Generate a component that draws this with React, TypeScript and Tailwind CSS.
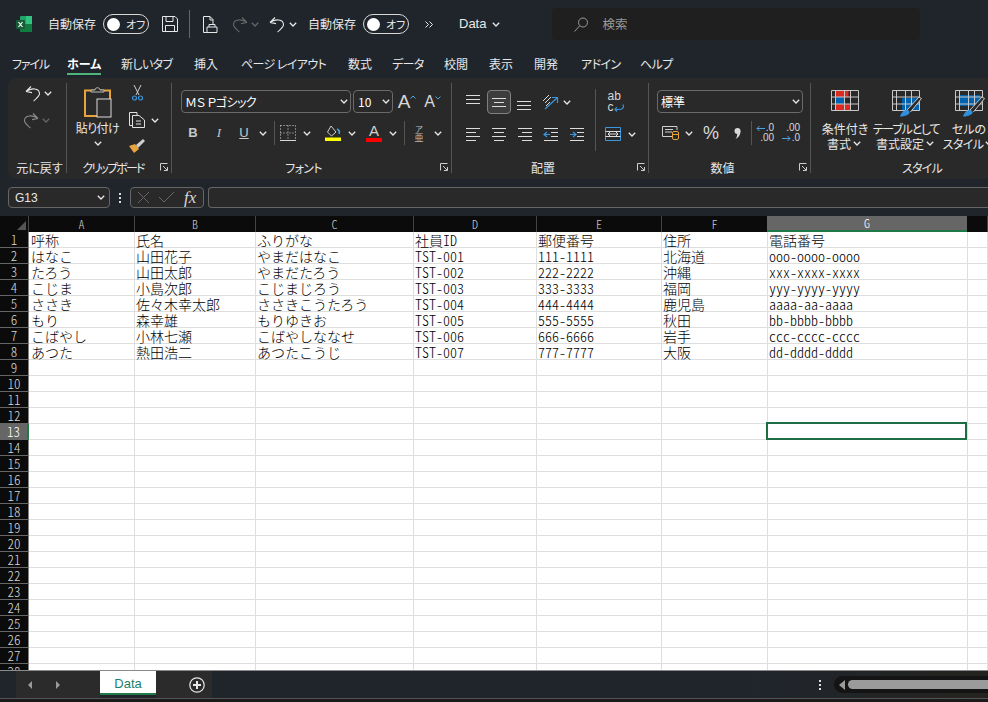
import React from "react";

const ui = "font-['Noto_Sans_CJK_JP','Noto_Sans',sans-serif]";

function Chev({ dim = false, cls = "w-3" }: { dim?: boolean; cls?: string }) {
  return (
    <span className={`flex h-6 items-center justify-center ${cls}`}>
      <svg width="8" height="5" viewBox="0 0 8 5" fill="none" stroke={dim ? "#666" : "#e8e8e8"} strokeWidth="1.3">
        <path d="M0.8 0.8 L4 4 L7.2 0.8" />
      </svg>
    </span>
  );
}

function Undo({ color = "#e6e6e6", flip = false, size = 16 }: { color?: string; flip?: boolean; size?: number }) {
  return (
    <svg width={size} height={size + 1} viewBox="0 0 16 17" fill="none" stroke={color} strokeWidth="1.1" className={flip ? "-scale-x-100" : ""}>
      <path d="M1 6.5 L6 1.5 M1 6.5 L7 7.6 M1 6.5 C6 2.5 14.5 3 14.5 8.6 C14.5 11.5 11 13.5 8.6 16" />
    </svg>
  );
}

function Toggle() {
  return (
    <div className="flex h-5 w-[46px] items-center rounded-full border border-[#d8d8d8] pl-[3px]">
      <span className="h-[13px] w-[13px] shrink-0 rounded-full bg-white" />
      <span className="ml-[6px] whitespace-nowrap text-[11px] leading-none text-[#e8e8e8]">オフ</span>
    </div>
  );
}

function Lines({ rows, w = 16 }: { rows: [number, number, number][]; w?: number }) {
  return (
    <svg width={w} height="17" viewBox={`0 0 ${w} 17`} stroke="#dcdcdc" strokeWidth="1">
      {rows.map((r, i) => (
        <path key={i} d={`M${r[0]} ${r[2] + 0.5} H${r[1]}`} />
      ))}
    </svg>
  );
}

function Launcher() {
  return (
    <svg width="8" height="8" viewBox="0 0 8 8" fill="none" stroke="#cfcfcf" strokeWidth="1">
      <path d="M0.5 7.5 V0.5 H7.5 M3 3 L7 7 M7.5 4 V7.5 H4" />
    </svg>
  );
}

function Group({ w, label, labelCls = "", launcher, children, last }: { w: string; label: string; labelCls?: string; launcher?: boolean; children: React.ReactNode; last?: boolean }) {
  return (
    <div className={`mb-[6px] mt-[5px] flex shrink-0 flex-col ${w} ${last ? "" : "border-r border-[#555]"}`}>
      <div className="min-h-0 flex-1">{children}</div>
      <div className={`relative h-[14px] whitespace-nowrap text-center text-[12px] leading-[17px] text-[#e6e6e6] ${labelCls}`}>
        {label}
        {launcher && (
          <span className="absolute right-[3px] top-[4px] flex">
            <Launcher />
          </span>
        )}
      </div>
    </div>
  );
}

const cell = "flex h-6 w-[26px] shrink-0 items-center justify-center";

function Combo({ cls, text, textCls = "" }: { cls: string; text: string; textCls?: string }) {
  return (
    <div className={`flex h-[23px] shrink-0 items-center justify-between rounded-[4px] border border-[#6a6a6a] pl-[3px] ${cls}`}>
      <span className={`whitespace-nowrap text-[12px] leading-none text-white ${textCls}`}>{text}</span>
      <Chev />
    </div>
  );
}

function StyleIcon({ kind }: { kind: number }) {
  const g = "#c8c8c8";
  return (
    <svg width="28" height="26" viewBox="0 0 28 26" fill="none" className="overflow-visible">
      {kind === 0 && (
        <>
          <rect x="4.500" y="1" width="13" height="6" fill="#dc2a20" />
          <rect x="4.500" y="7" width="9" height="7" fill="#0063b1" />
          <rect x="4.500" y="14" width="15" height="7" fill="#dc2a20" />
        </>
      )}
      {kind === 1 && <rect x="10" y="8" width="18" height="13" fill="#0063b1" />}
      {kind === 2 && <rect x="5" y="5" width="20" height="11" fill="#0063b1" />}
      <path d="M.5.5H27.500V20.500H.5Z M.5 7H27.500 M.5 14H27.500 M4.500 .5V20.500 M13.500 .5V20.500 M19.500 .5V20.500" stroke={g} strokeWidth="1" />
      {kind !== 0 && (
        <>
          <path d="M15 20 L27 7 L29.500 8.500 L18.500 22" fill="#2b2b2b" stroke={g} strokeWidth="1" />
          <path d="M8 26.500 C9.500 22 12 20 15 20 C18 21 18.500 23 16 24.500 C13.500 26 11 26.500 8 26.500Z" fill="#2f8fdc" />
        </>
      )}
    </svg>
  );
}

const widths = ["w-[106px]", "w-[121px]", "w-[158px]", "w-[123px]", "w-[125px]", "w-[106px]", "w-[200px]", "flex-1"];
const letters = ["A", "B", "C", "D", "E", "F", "G", ""];

const data: string[][] = [
  ["呼称", "氏名", "ふりがな", "社員ID", "郵便番号", "住所", "電話番号"],
  ["はなこ", "山田花子", "やまだはなこ", "TST-001", "111-1111", "北海道", "ooo-oooo-oooo"],
  ["たろう", "山田太郎", "やまだたろう", "TST-002", "222-2222", "沖縄", "xxx-xxxx-xxxx"],
  ["こじま", "小島次郎", "こじまじろう", "TST-003", "333-3333", "福岡", "yyy-yyyy-yyyy"],
  ["ささき", "佐々木幸太郎", "ささきこうたろう", "TST-004", "444-4444", "鹿児島", "aaaa-aa-aaaa"],
  ["もり", "森幸雄", "もりゆきお", "TST-005", "555-5555", "秋田", "bb-bbbb-bbbb"],
  ["こばやし", "小林七瀬", "こばやしななせ", "TST-006", "666-6666", "岩手", "ccc-cccc-cccc"],
  ["あつた", "熱田浩二", "あつたこうじ", "TST-007", "777-7777", "大阪", "dd-dddd-dddd"],
];

const tabs: [string, string][] = [
  ["ファイル", "w-[55px] tracking-[-1.2px]"],
  ["ホーム", "w-[54px]"],
  ["新しいタブ", "w-[73px] tracking-[-0.6px]"],
  ["挿入", "w-[47px]"],
  ["ページ レイアウト", "w-[107px] tracking-[-0.6px]"],
  ["数式", "w-[44px]"],
  ["データ", "w-[52px] tracking-[-0.6px]"],
  ["校閲", "w-[45px]"],
  ["表示", "w-[45px]"],
  ["開発", "w-[47px]"],
  ["アドイン", "w-[59px] tracking-[-0.6px]"],
  ["ヘルプ", "w-[50px] tracking-[-0.6px]"],
];

export default function App() {
  return (
    <div className={`flex h-[702px] w-[988px] flex-col overflow-hidden bg-[#20252c] [font-feature-settings:'palt'] ${ui}`}>
      {/* Title bar */}
      <div className="flex h-12 shrink-0 items-center text-[12px] text-[#e8e8e8]">
        <svg className="ml-4" width="16" height="16" viewBox="0 0 16 16">
          <rect x="4" y="0" width="12" height="16" rx="1" fill="#21a366" />
          <rect x="10" y="0" width="6" height="8" fill="#33c481" />
          <rect x="4" y="8" width="12" height="8" fill="#107c41" />
          <rect x="0" y="4" width="9" height="9" rx="1" fill="#185c37" />
          <path d="M2.500 6 L6.500 11 M6.500 6 L2.500 11" stroke="#fff" strokeWidth="1.2" />
        </svg>
        <span className="ml-4 w-12">自動保存</span>
        <span className="ml-[7px]"><Toggle /></span>
        <svg className="ml-[13px]" width="16" height="16" viewBox="0 0 16 16" fill="none" stroke="#e8e8e8" strokeWidth="1">
          <path d="M.5.5H13L15.500 3V15.500H.5Z M4 .5V5.500H11V.5 M3.500 15.500V9.500H12.500V15.500" />
        </svg>
        <span className="ml-[11px] h-7 w-px bg-[#666]" />
        <svg className="ml-[13px]" width="15" height="17" viewBox="0 0 15 17" fill="none" stroke="#e8e8e8" strokeWidth="1">
          <path d="M7 16.500H.5V.5H7L10 3.500V8 M4 16.500V11H14V16.500H4 M6 11V8.500H12V11 M7 .5V4H10" />
        </svg>
        <span className="ml-[14px]"><Undo color="#666" flip /></span>
        <Chev dim cls="ml-[1px] w-3" />
        <span className="ml-[8px]"><Undo /></span>
        <Chev cls="w-4" />
        <span className="ml-[7px] w-12">自動保存</span>
        <span className="ml-[7px]"><Toggle /></span>
        <svg className="ml-[16px]" width="8" height="7" viewBox="0 0 8 7" fill="none" stroke="#e8e8e8">
          <path d="M.5.5 L3.500 3.500 L.5 6.500 M4.500.5 L7.500 3.500 L4.500 6.500" />
        </svg>
        <span className="ml-[26px] font-['Liberation_Sans'] text-[13px]">Data</span>
        <Chev cls="ml-[2px] w-4" />
        <div className="ml-[48px] flex h-8 w-[368px] items-center rounded-[4px] bg-[#1f1f1f] pl-[22px] text-[#9a9a9a]">
          <svg width="14" height="15" viewBox="0 0 14 15" fill="none" stroke="#9a9a9a" strokeWidth="1">
            <circle cx="9" cy="5.500" r="4.500" />
            <path d="M5.500 9 L.5 14.500" />
          </svg>
          <span className="ml-[14px] text-[12.5px]">検索</span>
        </div>
      </div>

      {/* Ribbon tabs */}
      <div className="flex h-[30px] shrink-0 items-start whitespace-nowrap pl-3 pt-[7px] text-[12px] leading-[17px] text-[#e8e8e8]">
        {tabs.map(([t, w], i) => (
          <div key={t} className={`shrink-0 ${w}`}>
            <span className={`inline-block ${i === 1 ? "border-b-[2px] border-[#4fb37c] pb-[1px] font-bold text-white" : ""}`}>{t}</span>
          </div>
        ))}
      </div>

      {/* Ribbon */}
      <div className="ml-2 flex h-[101px] shrink-0 overflow-hidden rounded-l-lg bg-[#292929] text-[12px] text-[#e8e8e8]">
        <Group w="w-[59px]" label="元に戻す" labelCls="pl-[5px]">
          <div className="flex h-[20px] items-center pl-[17px]"><Undo /><Chev cls="ml-[1px] w-3" /></div>
          <div className="mt-[7px] flex h-[20px] items-center pl-[15px]"><Undo color="#8a8a8a" flip /><Chev dim cls="ml-[1px] w-3" /></div>
        </Group>

        <Group w="w-[105px]" label="クリップボード" labelCls="pr-[12px] tracking-[-1.8px]" launcher>
          <div className="flex pl-[4px]">
            <div className="flex w-[53px] shrink-0 flex-col items-center">
              <svg width="28" height="32" viewBox="0 0 28 32" fill="none" className="mt-[3px]">
                <path d="M1 4.500H26V30H1Z" stroke="#e8a33d" strokeWidth="2" />
                <rect x="13" y="13" width="14" height="18" fill="#2b2b2b" stroke="#dcdcdc" />
                <path d="M7 6V4H11C11 1 16 1 16 4H20V6Z" fill="#2b2b2b" stroke="#bdbdbd" />
              </svg>
              <span className="mt-[1px] whitespace-nowrap text-[12px] leading-[18px] tracking-[-0.5px]">貼り付け</span>
              <span className="-mt-[6px] flex"><Chev /></span>
            </div>
            <div className="-mt-[2px] flex flex-col">
              <div className="flex h-[24px] w-[26px] items-center justify-center">
                <svg width="11" height="16" viewBox="0 0 11 16" fill="none">
                  <path d="M2 0 L7 10 M9 0 L4 10" stroke="#cfcfcf" />
                  <circle cx="2.500" cy="13" r="2" stroke="#3a96dd" strokeWidth="1.200" />
                  <circle cx="8.500" cy="13" r="2" stroke="#3a96dd" strokeWidth="1.200" />
                </svg>
              </div>
              <div className="flex h-[30px] items-center pl-[5px]">
                <svg width="16" height="16" viewBox="0 0 16 16" fill="none" stroke="#e0e0e0">
                  <path d="M3.500 13.500H.5V.5H8V3 M3.500 3.500H10L15.500 8V15.500H3.500Z M7 9H12M7 12H12" />
                </svg>
                <Chev cls="ml-[4px] w-3" />
              </div>
              <div className="flex h-[22px] items-center pl-[5px]">
                <svg width="16" height="16" viewBox="0 0 16 16">
                  <path d="M0 8 L6 6 L10 11 L5 15 Z" fill="#e8a33d" />
                  <path d="M7 7 L14 1 L16 3 L9 10 Z" fill="#cfcfcf" />
                </svg>
              </div>
            </div>
          </div>
        </Group>

        <Group w="w-[280px]" label="フォント" labelCls="pr-[16px] tracking-[-0.6px]" launcher>
          <div className="mt-[7px] flex pl-[9px]">
            <Combo cls="w-[170px]" text="ＭＳ Ｐゴシック" textCls="tracking-[-0.5px]" />
            <Combo cls="ml-[2px] w-[40px]" text="10" textCls="ml-[1px]" />
            <span className="flex h-[23px] w-[26px] items-center justify-center pl-[2px] font-['Liberation_Sans'] text-[19px] leading-none text-[#d8d8d8]">
              A
              <svg className="mb-[9px]" width="6" height="4" viewBox="0 0 6 4" fill="none" stroke="#4aa3e0"><path d="M.5 3.500 L3 1 L5.500 3.500" /></svg>
            </span>
            <span className="flex h-[23px] w-[26px] items-center justify-center pl-[1px] font-['Liberation_Sans'] text-[16px] leading-none text-[#d8d8d8]">
              A
              <svg className="mb-[8px]" width="6" height="4" viewBox="0 0 6 4" fill="none" stroke="#4aa3e0"><path d="M.5 .5 L3 3 L5.500 .5" /></svg>
            </span>
          </div>
          <div className="mt-[8px] flex items-center pl-[8px] text-[#c8c8c8]">
            <span className={`${cell} font-['Liberation_Sans'] text-[13px] font-bold`}>B</span>
            <span className={`${cell} font-['Liberation_Serif'] text-[13px] italic`}>I</span>
            <span className="flex h-6 w-[24px] shrink-0 items-center justify-center font-['Liberation_Sans'] text-[13px] underline">U</span>
            <Chev cls="w-[14px]" />
            <span className="ml-[4px] block h-6 w-px bg-[#555]" />
            <span className={cell}>
              <svg width="16" height="16" viewBox="0 0 16 16" stroke="#d8d8d8" fill="none">
                <path d="M.5.5H15.500 M.5.5V15.500 M15.500.5V15.500 M8 .5V15.500 M.5 8H15.500" strokeDasharray="1 2" />
                <path d="M0 15.500H16" />
              </svg>
            </span>
            <Chev />
            <span className={`${cell} ml-[7px]`}>
              <svg width="17" height="16" viewBox="0 0 17 16" fill="none">
                <path d="M6 1 L11 7 L6.500 11 L2.500 7 Z" stroke="#cfcfcf" />
                <path d="M12 4 C14 5 15 7 14 9" stroke="#4aa3e0" strokeWidth="1.500" />
                <rect x="0" y="12.500" width="16" height="3.500" fill="#ffff00" />
              </svg>
            </span>
            <Chev />
            <span className={`${cell} ml-[3px]`}>
              <span className="flex flex-col items-center font-['Liberation_Sans'] text-[15px] leading-[14px] text-[#cfcfcf]">
                A
                <span className="h-[4px] w-[16px] bg-[#ff0000]" />
              </span>
            </span>
            <Chev />
            <span className="ml-[5px] block h-6 w-px bg-[#555]" />
            <span className={`${cell} ml-[1px] flex-col text-[8px] leading-[9px] text-[#bbb]`}>
              <span>ア</span>
              <span className="text-[9px]">亜</span>
            </span>
            <Chev />
          </div>
        </Group>

        <Group w="w-[197px]" label="配置" labelCls="pr-[14px]" launcher>
          <div className="flex">
            <div className="w-[135px] shrink-0">
              <div className="mt-[7px] flex items-center pl-[8px]">
                <span className={cell}><Lines rows={[[1, 15, 1], [1, 15, 5], [1, 15, 9]]} /></span>
                <span className="ml-[1px] flex h-[24px] w-[24px] shrink-0 items-center justify-center rounded-[4px] border border-[#808080] bg-[#3d3d3d]">
                  <Lines rows={[[1, 15, 4], [3, 13, 8], [1, 15, 12]]} />
                </span>
                <span className={cell}><Lines rows={[[1, 15, 7], [1, 15, 11], [1, 15, 15]]} /></span>
                <span className={cell}>
                  <svg width="17" height="17" viewBox="0 0 17 17" fill="none">
                    <path d="M1 7 L7 1 M3 9 L9 3 M4 12 L8 8" stroke="#dcdcdc" />
                    <path d="M3 15 L15 4 M10 3.500 H15.500 V9" stroke="#3a96dd" strokeWidth="1.200" />
                  </svg>
                </span>
                <Chev cls="ml-[-1px] w-[10px]" />
              </div>
              <div className="mt-[8px] flex items-center pl-[8px]">
                <span className={cell}><Lines rows={[[1, 15, 2], [1, 11, 6], [1, 15, 10], [1, 11, 14]]} /></span>
                <span className={cell}><Lines rows={[[1, 15, 2], [3, 13, 6], [1, 15, 10], [3, 13, 14]]} /></span>
                <span className={cell}><Lines rows={[[1, 15, 2], [5, 15, 6], [1, 15, 10], [5, 15, 14]]} /></span>
                <span className={cell}>
                  <svg width="16" height="16" viewBox="0 0 16 16" fill="none">
                    <path d="M1 2.500H15 M8 6.500H15 M8 10.500H15 M1 14.500H15" stroke="#dcdcdc" />
                    <path d="M7 8.500H1 M4 6 L1 8.500 L4 11" stroke="#3a96dd" strokeWidth="1.200" />
                  </svg>
                </span>
                <span className={cell}>
                  <svg width="16" height="16" viewBox="0 0 16 16" fill="none">
                    <path d="M1 2.500H15 M8 6.500H15 M8 10.500H15 M1 14.500H15" stroke="#dcdcdc" />
                    <path d="M1 8.500H7 M4 6 L7 8.500 L4 11" stroke="#3a96dd" strokeWidth="1.200" />
                  </svg>
                </span>
              </div>
            </div>
            <span className="ml-[8px] mt-[6px] block h-[62px] w-px shrink-0 bg-[#555]" />
            <div className="ml-[4px] shrink-0">
              <div className={`${cell} ml-[3px] mt-[7px] font-['Liberation_Sans']`}>
                <span className="relative flex flex-col text-[12px] leading-[11px] text-[#d8d8d8]">
                  <span>ab</span>
                  <span className="flex items-center">c
                    <svg width="11" height="8" viewBox="0 0 11 8" fill="none" stroke="#3a96dd" strokeWidth="1.200">
                      <path d="M9 0.500 C10.500 4 8 5.500 5 5.500 H1 M3 3 L1 5.500 L3 7.500" />
                    </svg>
                  </span>
                </span>
              </div>
              <div className="mt-[8px] flex items-center">
                <span className={cell}>
                  <svg width="16" height="14" viewBox="0 0 16 14" fill="none">
                    <path d="M.5.5H15.500V13.500H.5Z" stroke="#3a96dd" />
                    <path d="M.5 4.500H15.500 M.5 9.500H15.500" stroke="#dcdcdc" />
                    <path d="M3 7H13 M5 5 L3 7 L5 9 M11 5 L13 7 L11 9" stroke="#dcdcdc" />
                  </svg>
                </span>
                <Chev />
              </div>
            </div>
          </div>
        </Group>

        <Group w="w-[162px]" label="数値" labelCls="pr-[14px]" launcher>
          <div className="mt-[7px] flex pl-[8px]">
            <Combo cls="w-[146px]" text="標準" />
          </div>
          <div className="mt-[8px] flex items-center pl-[8px] text-[#d8d8d8]">
            <span className={cell}>
              <svg width="17" height="14" viewBox="0 0 17 14" fill="none">
                <path d="M11 10.500H.5V.5H15V4 M3 3.500H11 M3 6H10" stroke="#cfcfcf" />
                <rect x="10.500" y="5.500" width="6" height="8" rx="1.500" stroke="#e8a33d" />
                <path d="M10.500 8.500H16.500" stroke="#e8a33d" />
              </svg>
            </span>
            <Chev />
            <span className="ml-[3px] flex h-6 w-[26px] items-center justify-center font-['Liberation_Sans'] text-[18px] font-light">%</span>
            <span className="flex h-6 w-[26px] items-center justify-center">
              <svg width="7" height="11" viewBox="0 0 7 11" fill="#d8d8d8">
                <circle cx="3.500" cy="3" r="3" />
                <path d="M6.500 3 C6.500 7 4.500 9.500 1.500 11 C3 9 3.500 7 3 5.500 Z" />
              </svg>
            </span>
            <span className="ml-[1px] block h-6 w-px bg-[#555]" />
            <span className={`${cell} font-['Liberation_Sans'] text-[10px] leading-[10px]`}>
              <span className="flex flex-col items-end">
                <span className="flex items-center">
                  <svg className="mr-[1px]" width="9" height="7" viewBox="0 0 9 7" fill="none" stroke="#4aa3e0"><path d="M9 3.500H1 M3.500 1 L1 3.500 L3.500 6" /></svg>
                  .0
                </span>
                <span>.00</span>
              </span>
            </span>
            <span className={`${cell} font-['Liberation_Sans'] text-[10px] leading-[10px]`}>
              <span className="flex flex-col items-end">
                <span>.00</span>
                <span className="flex items-center">
                  <svg className="mr-[1px]" width="9" height="7" viewBox="0 0 9 7" fill="none" stroke="#4aa3e0"><path d="M0 3.500H8 M5.500 1 L8 3.500 L5.500 6" /></svg>
                  .0
                </span>
              </span>
            </span>
          </div>
        </Group>

        <Group w="w-[180px]" label="スタイル" labelCls="pl-[42px] tracking-[-0.8px]" last>
          <div className="mt-[7px] flex">
            <div className="flex w-[68px] shrink-0 flex-col items-center text-center text-[12px] leading-[15px]">
              <StyleIcon kind={0} />
              <span className="mt-[5px] whitespace-nowrap">条件付き</span>
              <span className="flex items-center">書式<Chev cls="h-[15px] w-3" /></span>
            </div>
            <div className="flex w-[54px] shrink-0 flex-col items-center text-center text-[12px] leading-[15px]">
              <StyleIcon kind={1} />
              <span className="mt-[5px] whitespace-nowrap tracking-[-1.2px]">テーブルとして</span>
              <span className="flex items-center whitespace-nowrap">書式設定<Chev cls="h-[15px] w-3" /></span>
            </div>
            <div className="flex w-[72px] shrink-0 flex-col items-center text-center text-[12px] leading-[15px]">
              <StyleIcon kind={2} />
              <span className="mt-[5px] whitespace-nowrap">セルの</span>
              <span className="flex items-center whitespace-nowrap tracking-[-0.6px]">スタイル<Chev cls="h-[15px] w-3" /></span>
            </div>
          </div>
        </Group>
      </div>

      {/* Formula bar */}
      <div className="flex h-[37px] shrink-0 items-start pl-2 pt-[8px]">
        <div className="flex h-[21px] w-[102px] items-center justify-between rounded-[4px] border border-[#666] bg-[#292929] pl-[6px] pr-[2px] font-['Liberation_Sans'] text-[12px] text-[#e8e8e8]">
          G13<Chev />
        </div>
        <span className="ml-[8px] flex h-[21px] w-[3px] flex-col items-center justify-center gap-[2px]">
          <i className="h-[2px] w-[2px] bg-[#ddd]" /><i className="h-[2px] w-[2px] bg-[#ddd]" /><i className="h-[2px] w-[2px] bg-[#ddd]" />
        </span>
        <div className="ml-[9px] flex h-[21px] w-[74px] items-center rounded-[4px] border border-[#666] bg-[#292929] pl-[6px]">
          <svg width="40" height="13" viewBox="0 0 40 13" fill="none" stroke="#666">
            <path d="M1 1 L12 12 M12 1 L1 12 M22 6 L27 11 L37 1" />
          </svg>
          <span className="ml-[7px] font-['Liberation_Serif'] text-[17px] italic leading-none text-[#d8d8d8]">fx</span>
        </div>
        <div className="ml-[4px] h-[21px] flex-1 rounded-l-[4px] border border-r-0 border-[#666] bg-[#292929]" />
      </div>

      {/* Sheet */}
      <div className="flex h-[454px] shrink-0 flex-col overflow-hidden bg-white text-[14px] font-light leading-4 text-black [font-feature-settings:'hwid']">
        <div className="flex h-4 shrink-0 bg-[#0b0b0b]">
          <div className="flex w-[29px] shrink-0 items-end justify-end border-r border-[#444] pb-[2px] pr-[2px]">
            <span className="h-0 w-0 border-b-[9px] border-l-[9px] border-b-[#555] border-l-transparent" />
          </div>
          {letters.map((l, i) => (
            <div
              key={i}
              className={`flex shrink-0 items-center justify-center text-[12px] ${widths[i]} ${
                l === "G" ? "-ml-px border-b-2 border-[#1f7a4a] bg-[#666] text-white" : "border-r border-[#444] text-[#c8c8c8]"
              }`}
            >
              {l}
            </div>
          ))}
        </div>
        {Array.from({ length: 28 }, (_, r) => (
          <div key={r} className="flex h-4 shrink-0">
            <div
              className={`flex w-[29px] shrink-0 items-center justify-center border-b border-b-[#666] text-[13px] ${
                r === 12 ? "border-r-2 border-r-[#1f7a4a] bg-[#666] text-white" : "border-r border-r-[#808080] bg-[#0b0b0b] text-[#d8d8d8]"
              }`}
            >
              {r + 1}
            </div>
            {widths.map((w, c) => (
              <div
                key={c}
                className={`shrink-0 whitespace-nowrap border-b border-r border-[#dedede] ${c === 0 ? "pl-[2px]" : "pl-[1px]"} ${w} ${
                  r === 12 && c === 6 ? "relative z-10" : ""
                }`}
              >
                {data[r] && data[r][c] ? data[r][c] : null}
                {r === 12 && c === 6 ? <span className="absolute -left-[2px] -top-[2px] bottom-[-1px] right-0 border-2 border-[#1f6e43]" /> : null}
              </div>
            ))}
          </div>
        ))}
      </div>

      {/* Sheet tabs */}
      <div className="z-20 flex h-[28px] shrink-0 border-t border-[#8a8a8a] bg-[#20252c]">
        <div className="ml-4 flex w-[84px] items-center bg-[#2b2b2b] pl-[12px]">
          <svg width="40" height="8" viewBox="0 0 40 8" fill="#9a9a9a">
            <path d="M4 0V8L0 4Z M28 0V8L32 4Z" />
          </svg>
        </div>
        <div className="flex h-[24px] w-[56px] items-center justify-center border-b-[2px] border-[#1f7a4a] bg-white pt-[3px] font-['Liberation_Sans'] text-[13px] text-[#1a7f6b]">
          Data
        </div>
        <div className="flex w-[56px] items-center bg-[#2b2b2b] pl-[33px]">
          <svg width="16" height="16" viewBox="0 0 16 16" fill="none" stroke="#e8e8e8">
            <circle cx="8" cy="8" r="7.200" strokeWidth="1.200" />
            <path d="M8 4V12 M4 8H12" strokeWidth="2" />
          </svg>
        </div>
        <div className="ml-auto flex w-[240px] items-center bg-linear-to-r from-[#20252c] to-[#24231f] pl-[71px]">
          <span className="flex flex-col gap-[2px]">
            <i className="h-[2px] w-[2px] bg-[#ddd]" /><i className="h-[2px] w-[2px] bg-[#ddd]" /><i className="h-[2px] w-[2px] bg-[#ddd]" />
          </span>
          <div className="ml-[13px] flex h-[17px] flex-1 items-center rounded-l-full bg-[#141414] pl-[5px]">
            <span className="h-0 w-0 border-y-[5px] border-r-[6px] border-y-transparent border-r-[#9a9a9a]" />
            <span className="ml-[3px] h-[9px] flex-1 rounded-l-full bg-[#9b9b9b]" />
          </div>
        </div>
      </div>
      <div className="flex-1 border-t border-[#555] bg-[#1a1a1a]" />
    </div>
  );
}
